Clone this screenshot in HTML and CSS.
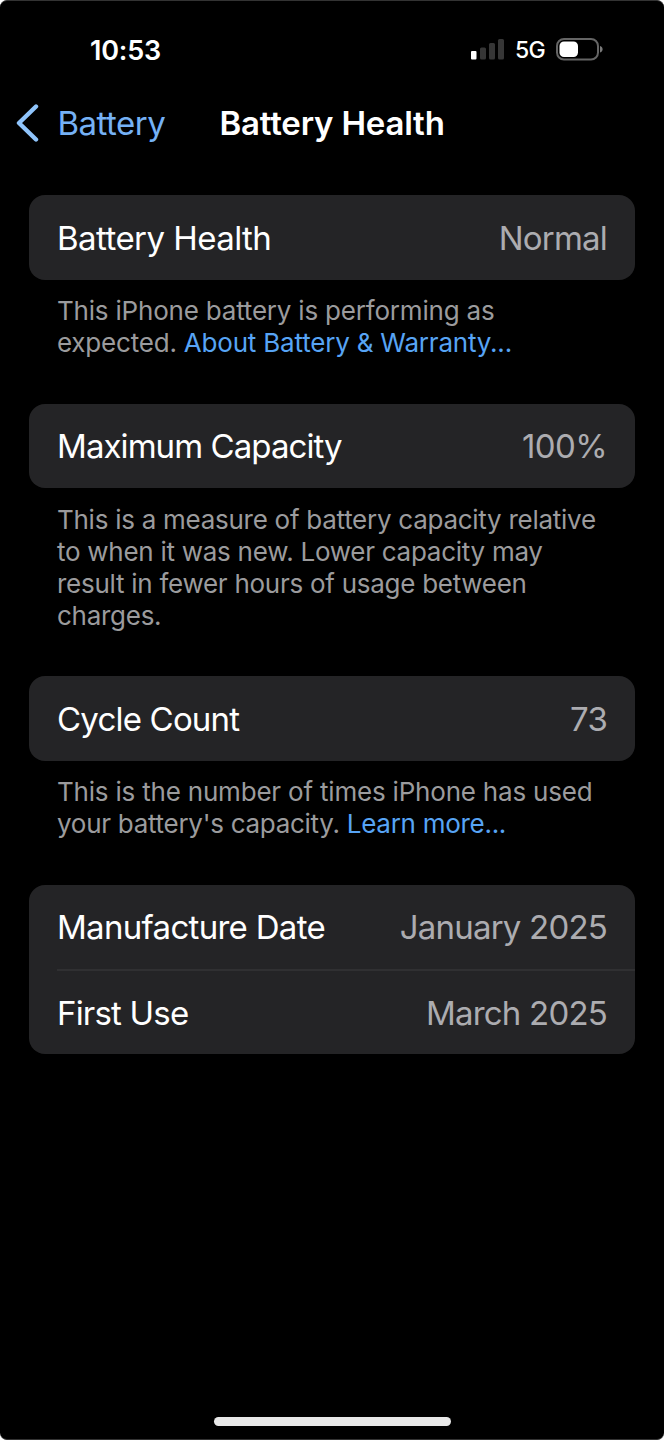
FILE: index.html
```html
<!DOCTYPE html>
<html lang="en">

<head>
    <title>Battery Health</title>
    <meta charset="UTF-8">
    <meta name="viewport" content="width=device-width, initial-scale=1">
    <link rel="stylesheet" href="styles.css">
</head>

<body>
    <div class="screen">
        <div class="status">
            <span class="time">10:53</span>
            <div class="status-right">
                <svg class="signal" width="34" height="22" viewBox="0 0 34 22">
                    <rect x="0" y="12" width="5.5" height="8.5" rx="1" fill="#fff" />
                    <rect x="9" y="8.5" width="6" height="12" rx="1.5" fill="#363636" />
                    <rect x="18" y="4" width="6" height="16.5" rx="1.5" fill="#363636" />
                    <rect x="27" y="0" width="6" height="20.5" rx="1.5" fill="#363636" />
                </svg>
                <span class="network">5G</span>
                <svg class="battery" width="48" height="24" viewBox="0 0 48 24">
                    <rect x="1" y="1" width="41" height="20.5" rx="7" fill="none" stroke="#656565" stroke-width="2" />
                    <rect x="3.5" y="3.5" width="18.5" height="15.5" rx="4.5" fill="#fff" />
                    <path d="M44 8 C47.5 8.8 47.5 13.7 44 14.5 Z" fill="#7a7a7a" />
                </svg>
            </div>
        </div>

        <div class="nav">
            <a class="back">
                <svg width="24" height="40" viewBox="0 0 24 40">
                    <path d="M21 3.5 L4 20 L21 36.5" fill="none" stroke="#8fc4fb" stroke-width="4.4" stroke-linecap="round" stroke-linejoin="round" />
                </svg>
                <span>Battery</span>
            </a>
            <h1>Battery Health</h1>
        </div>

        <div class="list">
            <div class="group">
                <div class="card">
                    <div class="row"><span class="label health">Battery Health</span><span class="value">Normal</span></div>
                </div>
                <p class="note">This iPhone battery is performing as<br>expected. <a>About Battery &amp; Warranty...</a></p>
            </div>
            <div class="group">
                <div class="card">
                    <div class="row"><span class="label capacity">Maximum Capacity</span><span class="value percent">100%</span></div>
                </div>
                <p class="note long">This is a measure of battery capacity relative<br>to when it was new. Lower capacity may<br>result in fewer hours of usage between<br>charges.</p>
            </div>
            <div class="group">
                <div class="card">
                    <div class="row"><span class="label">Cycle Count</span><span class="value">73</span></div>
                </div>
                <p class="note">This is the number of times iPhone has used<br><span class="more">your battery's capacity. <a>Learn more...</a></span></p>
            </div>
            <div class="group">
                <div class="card">
                    <div class="row"><span class="label date">Manufacture Date</span><span class="value">January 2025</span></div>
                    <div class="row"><span class="label">First Use</span><span class="value">March 2025</span></div>
                </div>
            </div>
        </div>

        <div class="home"></div>
    </div>
</body>

</html>
```
FILE: styles.css
```css
* {
    margin: 0;
    padding: 0;
    box-sizing: border-box;
}

body {
    background: #fff;
    font-family: Inter, "Liberation Sans", sans-serif;
}

.screen {
    display: flex;
    flex-direction: column;
    width: 664px;
    height: 1440px;
    background: #000;
    border-top: 1px solid #333;
    border-bottom: 1px solid #333;
    border-radius: 7px;
    overflow: hidden;
}

.status {
    display: flex;
    justify-content: space-between;
    align-items: center;
    height: 98px;
    padding: 0 60px 0 90px;
    color: #fff;
}

.time {
    font-size: 27px;
    font-weight: 600;
    letter-spacing: -0.2px;
}

.status-right {
    display: flex;
    align-items: center;
}

.network {
    margin: 0 11px 0 10px;
    font-size: 23px;
    font-weight: 500;
    letter-spacing: -0.7px;
}

.nav {
    display: grid;
    grid-template-columns: 204.5px 1fr;
    align-items: center;
    height: 50px;
    padding: 0 0 2px 15px;
}

.back {
    display: flex;
    align-items: center;
    gap: 18.5px;
    font-size: 33px;
    letter-spacing: -0.5px;
    color: #75b1f5;
}

h1 {
    font-size: 33px;
    font-weight: 600;
    letter-spacing: -0.2px;
    color: #fff;
}

.list {
    flex: 1;
    padding: 46px 29px 0;
}

.group {
    margin-bottom: 45px;
}

.card {
    border-radius: 16px;
    background: #242426;
}

.row {
    display: flex;
    justify-content: space-between;
    align-items: center;
    height: 84.5px;
    margin-left: 28px;
    padding: 1px 28px 0 0;
    font-size: 33px;
    letter-spacing: -0.8px;
    color: #fff;
}

.row + .row {
    height: 85px;
    padding-top: 0;
    border-top: 2px solid #303032;
}

.health {
    letter-spacing: -0.55px;
}

.capacity {
    letter-spacing: -0.93px;
}

.date {
    letter-spacing: -0.7px;
}

.value {
    color: #acacb0;
}

.percent {
    letter-spacing: -0.6px;
}

.note {
    padding: 15px 0 0 28px;
    font-size: 26px;
    line-height: 32px;
    letter-spacing: -0.2px;
    white-space: nowrap;
    color: #9b9b9d;
}

.long {
    padding-top: 15.5px;
    margin-bottom: -0.5px;
    letter-spacing: -0.27px;
}

.note a {
    color: #57a4f5;
}

.more {
    letter-spacing: -0.28px;
}

.home {
    width: 237px;
    height: 9px;
    margin: 0 auto 13px;
    border-radius: 5px;
    background: #e8e8e8;
}
```
